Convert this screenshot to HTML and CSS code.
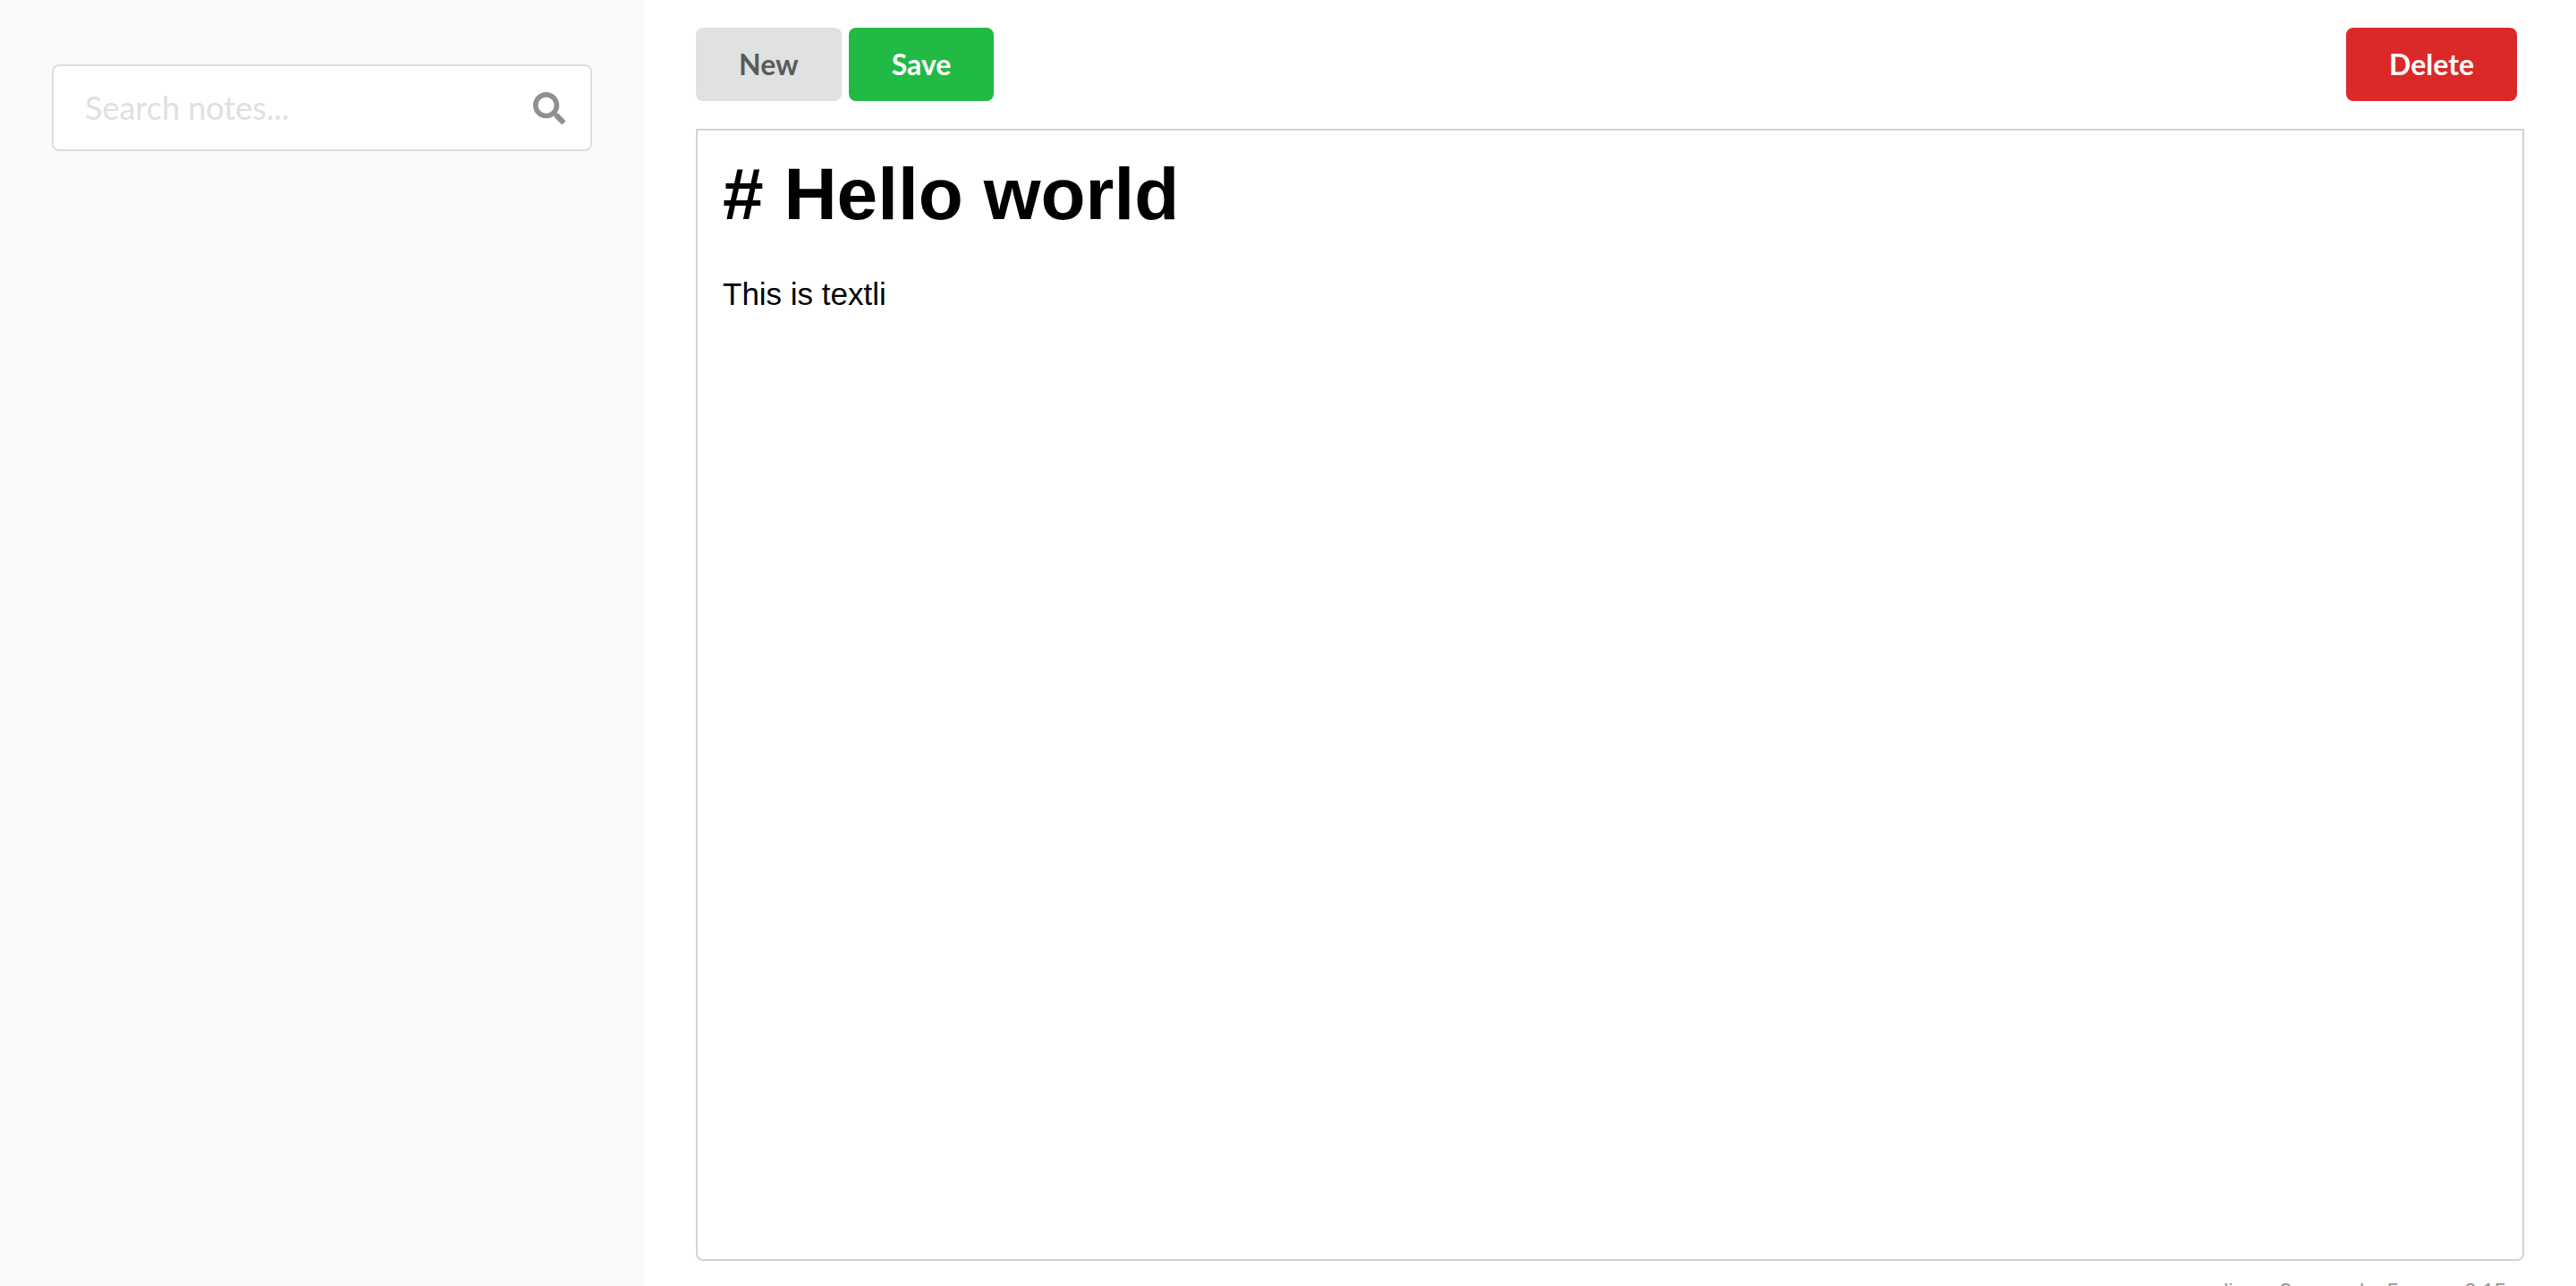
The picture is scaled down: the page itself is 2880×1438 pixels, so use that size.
FILE: index.html
```html
<!DOCTYPE html>
<html lang="en">
<head>
<meta charset="utf-8">
<title>Notes</title>
<link rel="stylesheet" href="styles.css">
</head>
<body>
<div class="app">
  <aside class="sidebar">
    <form class="search" role="search">
      <input class="search-input" type="search" placeholder="Search notes..." aria-label="Search notes">
      <svg class="search-icon" viewBox="0 0 512 512" aria-hidden="true"><path d="M505 442.700L405.300 343c-4.500-4.500-10.600-7-17-7H372c27.600-35.300 44-79.700 44-128C416 93.100 322.900 0 208 0S0 93.100 0 208s93.100 208 208 208c48.300 0 92.700-16.400 128-44v16.300c0 6.400 2.500 12.500 7 17l99.700 99.700c9.400 9.400 24.600 9.400 33.900 0l28.300-28.300c9.400-9.400 9.400-24.600.1-34zM208 336c-70.700 0-128-57.200-128-128 0-70.700 57.200-128 128-128 70.700 0 128 57.200 128 128 0 70.700-57.200 128-128 128z"/></svg>
    </form>
  </aside>
  <main class="content">
    <div class="toolbar">
      <button class="button" type="button">New</button>
      <button class="button save" type="button">Save</button>
      <button class="button delete" type="button">Delete</button>
    </div>
    <div class="editor" contenteditable="true" role="textbox" aria-multiline="true" aria-label="Note" spellcheck="false">
      <h1 class="heading"># Hello world</h1>
      <p class="line">This is textli</p>
    </div>
    <footer class="status">
      <span class="status-item">lines: 3</span>
      <span class="status-item">words: 5</span>
      <span class="status-item">2:15</span>
    </footer>
  </main>
</div>
</body>
</html>
```
FILE: styles.css
```css
* {
  box-sizing: border-box;
}

body {
  margin: 0;
  background: #fff;
  font-family: Lato, sans-serif;
}

.app {
  display: grid;
  grid-template-columns: 25% 1fr;
  height: 100vh;
  overflow: hidden;
}

.sidebar {
  padding: 72px 58px;
  background: #fafafa;
}

.search {
  display: flex;
  align-items: center;
  padding-right: 28px;
  background: #fff;
  border: 2px solid #dededf;
  border-radius: 8px;
}

.search-input {
  flex: 1;
  min-width: 0;
  padding: 24px 35px;
  border: 0;
  outline: 0;
  background: transparent;
  color: #222;
  font: 36px/45px Lato, sans-serif;
}

.search-input::placeholder {
  color: #e0e0e0;
}

.search-icon {
  width: 36px;
  height: 36px;
  fill: #909090;
}

.content {
  padding: 31px 58px 0;
}

.toolbar {
  display: flex;
  gap: 8px;
  padding-right: 8px;
  margin-bottom: 31px;
}

.button {
  padding: 25px 48px;
  border: 0;
  border-radius: 8px;
  background: #e0e1e2;
  color: #5a5a5a;
  font: bold 32px/32px Lato, sans-serif;
}

.save {
  background: #21ba45;
  color: #fff;
}

.delete {
  margin-left: auto;
  background: #db2828;
  color: #fff;
}

.editor {
  min-height: calc(100vh - 172px);
  padding: 21px 28px;
  border: 2px solid #ced4da;
  border-radius: 0 0 8px 8px;
  outline: 0;
  color: #000;
  font: 35px/56px "Liberation Sans", Arial, sans-serif;
}

.heading {
  margin: 0 0 34px;
  font-size: 82px;
  line-height: 100px;
}

.line {
  margin: 0;
}

.status {
  display: flex;
  justify-content: flex-end;
  gap: 24px;
  padding: 16px 20px;
  color: #959694;
  font: 24px/36px "Liberation Sans", Arial, sans-serif;
}

.status-item {
  min-width: 96px;
  text-align: right;
}
```
